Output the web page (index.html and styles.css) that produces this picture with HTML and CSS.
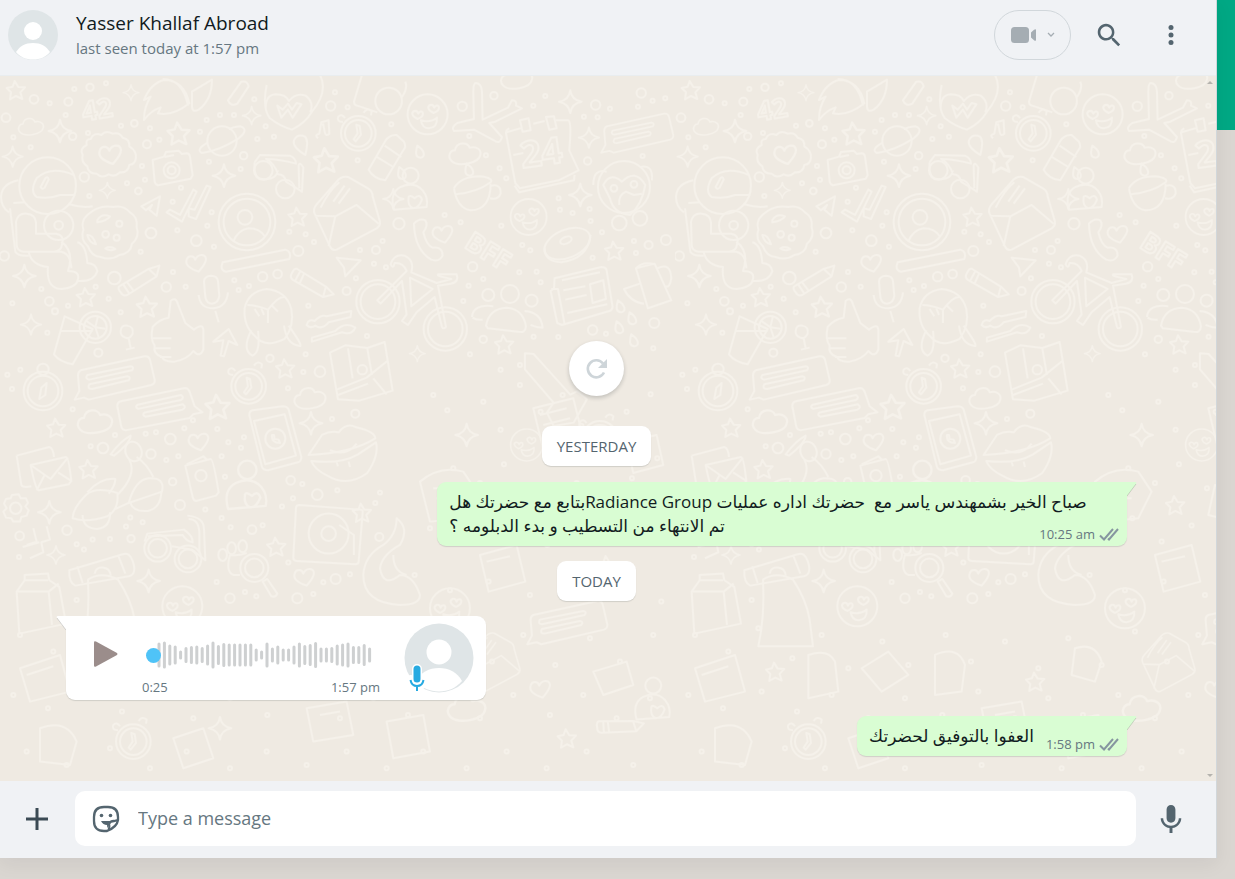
FILE: index.html
```html
<!DOCTYPE html>
<html lang="en">
<head>
  <meta charset="UTF-8" />
  <title>Chat</title>
  <link rel="stylesheet" href="styles.css">
</head>
<body>

  <main class="app">
    <header class="chat-header">
      <svg class="avatar" viewBox="0 0 50 50" aria-hidden="true">
        <circle cx="25" cy="25" r="25" fill="#dfe5e7"/>
        <circle cx="25" cy="21" r="9" fill="#fff"/>
        <path d="M8 42C12 36 17 33 25 33s13 3 17 9c-4 5-10 7.500-17 7.500S12 47 8 42z" fill="#fff"/>
      </svg>
      <div class="contact">
        <h1>Yasser Khallaf Abroad</h1>
        <p>last seen today at 1:57 pm</p>
      </div>
      <button class="video-btn" aria-label="Video call">
        <svg width="26" height="16" viewBox="0 0 26 16"><rect width="18" height="16" rx="3.500"/><path d="M20 5.500L23 2.700Q25 1.500 25 3v10q0 1.500-2 .3L20 10.500z"/></svg>
        <svg width="8" height="6" viewBox="0 0 8 6"><path d="M1 1l3 3 3-3" fill="none" stroke="#a5adb3" stroke-width="1.300"/></svg>
      </button>
      <button class="icon-btn" aria-label="Search">
        <svg width="30" height="30" viewBox="0 0 24 24"><path d="M15.900,14.300H15L14.700,14c1-1.100,1.600-2.700,1.600-4.300c0-3.700-3-6.700-6.700-6.700S3,6,3,9.700s3,6.700,6.700,6.700c1.600,0,3.200-0.600,4.300-1.600l0.300,0.300v0.800l5.100,5.100l1.500-1.500L15.900,14.300z M9.700,14.300c-2.600,0-4.600-2.100-4.600-4.600s2.100-4.600,4.600-4.600s4.600,2.100,4.600,4.600S12.300,14.300,9.700,14.300z"/></svg>
      </button>
      <button class="icon-btn" aria-label="Menu">
        <svg width="30" height="30" viewBox="0 0 24 24"><circle cx="12" cy="6" r="2"/><circle cx="12" cy="12" r="2"/><circle cx="12" cy="18" r="2"/></svg>
      </button>
    </header>

    <section class="chat">
      <svg class="wallpaper" width="100%" height="100%" aria-hidden="true">
        <defs>
          <path id="star" d="M-3-27L8-9 28-8 14 7 20 27 1 18-17 28-14 7-27-6-9-10z"/>
          <path id="spark" d="M0-34Q4-5 34 0 4 5 0 34-5 5-34 0-4-4 0-34z"/>
          <path id="heart" d="M8 28C-22 18-32 4-28-8-24-22-6-22-2-8 6-26 28-26 30-10 30 4 18 16 8 28z"/>
          <path id="cloud" d="M-40 22c-14-14-4-32 10-32 4-26 38-26 44-8 22-6 36 8 32 22-4 26-68 36-86 18z"/>
          <path id="drop" d="M-8-18C14-4 18 16 2 18-14 18-14 4-8-18z"/>
          <g id="pencil"><path d="M-60 22L28-30 60-40 52-8-36 48Q-48 54-56 40-66 28-60 22zM28-30L52-8M-50 14L-30 44M-38 8L-18 34"/></g>
          <g id="chat"><path d="M-100-20L92-62q12-2 16 10l14 60q2 12-10 16L-76 68l-14-6-28 6 14-26-4-46q0-12 8-16z"/><path d="M-80-6L50-32q12 2 4 12L-74 8q-14-2-6-14zM-74 22L40-2q12 2 4 12L-66 36q-16 0-8-14z"/></g>
          <g id="face"><circle r="60"/><path d="M-20 18Q8 26 28 10 30 40 4 42-16 42-20 18zM-30 14c-18-8-20-20-10-24 8-2 10 2 12 8 4-10 14-8 14 0 0 10-8 12-16 16zM18-4C0-12-2-24 8-28c8-2 10 2 12 8 4-10 14-8 14 0 0 10-8 12-16 16z"/></g>
          <g id="clock"><circle r="52"/><circle r="40"/><path d="M-6-26l10 4 4 26-16 20-6-6 12-18z"/><path d="M-46-34q-20 0-14-16 10-10 20 4M16-62q10-16 24-4l-2 12"/></g>
          <g id="mail"><path d="M-96 16q-6-14 6-28l60-68q14-18 34-14l60 34q14 8 14 24l22 76q2 12-10 20L-30 124q-14 4-20-10zM-96 22l62 2 64-34 66 56M-34 24l-20 90M-78-2q26-52 56-76M-40-20l34-48M-24-14l34-46"/></g>
          <g id="person"><circle cy="-48" r="24"/><path d="M-50 54q-14-50 20-68 40-18 66 10 18 22 12 50zM-6 16q-4 28 14 34 16 0 26-26-6-20-22-4-14-12-18-4z"/></g>
          <g id="dots"><path d="M40 187h0M92 217h0M149 85h0M197 120h0M223 42h0M264 174h0M363 152h0M450 160h0M478 194h0M600 170h0M620 135h0M660 120h0M702 120h0M763 73h0M797 154h0M822 185h0M772 192h0M627 260h0M722 282h0M426 273h0M435 314h0M543 338h0M381 325h0M268 363h0M518 380h0M532 466h0M635 412h0M622 452h0M868 470h0M917 478h0M942 501h0M1080 525h0M1148 498h0M1122 566h0M1068 610h0M1158 577h0M642 515h0M422 530h0M519 591h0M557 635h0M703 616h0M747 633h0M716 645h0M124 642h0M204 692h0M287 635h0M326 671h0M362 712h0M37 685h0M142 773h0M917 838h0M1101 783h0M925 692h0M1174 148h0M1073 256h0M1043 97h0M1005 52h0M318 25h0M1408 183h0M1458 241h0M1499 280h0M1636 63h0M1600 92h0M1752 125h0M1793 127h0M1830 101h0M1914 95h0M1958 77h0M1996 70h0M1928 243h0M1519 310h0M1676 370h0M1680 404h0M1718 414h0M1769 402h0M1772 438h0M1504 452h0M1382 442h0M1334 420h0M1567 510h0M1591 526h0M1610 590h0M1558 592h0M1622 622h0M1450 612h0M1406 632h0M1390 678h0M1806 472h0M1902 498h0M1908 534h0M1778 548h0M1601 785h0M1675 786h0M1410 838h0M1502 884h0M1560 870h0M1818 776h0M1960 820h0M22 899h0M61 884h0M36 942h0M218 1003h0M272 1114h0M345 1080h0M437 1076h0M468 1072h0M579 1036h0M553 1060h0M535 1144h0M499 1155h0M665 1144h0M675 1205h0M732 1087h0M685 1102h0M723 1118h0M652 1062h0M864 940h0M910 891h0M996 1032h0M1012 1246h0M846 1295h0M879 1270h0M907 1227h0M788 1351h0M692 1357h0M665 1329h0M616 1304h0M391 1328h0M428 1342h0M378 1355h0M330 1392h0M278 1394h0M230 1408h0M252 1424h0M57 1446h0M230 1575h0M650 1521h0M735 1551h0M769 1564h0M865 1463h0M970 1522h0M1050 1498h0M940 1557h0M1140 1253h0M1126 1284h0M1300 960h0M1342 1006h0M1450 980h0M1502 1064h0M1560 930h0M1622 1010h0M1688 960h0M1744 1052h0M1822 944h0M1880 1010h0M1952 958h0M1360 1180h0M1440 1224h0M1512 1168h0M1596 1240h0M1660 1160h0M1730 1224h0M1808 1144h0M1896 1210h0M1972 1150h0M1290 1360h0M1372 1330h0M1460 1400h0M1550 1352h0M1642 1410h0M1720 1342h0M1830 1400h0M1926 1350h0M1244 1500h0M1350 1546h0M1466 1520h0M1590 1560h0M1688 1512h0M1780 1570h0M1888 1530h0M1984 1580h0M60 1680h0M160 1730h0M250 1660h0M352 1750h0M440 1680h0M520 1780h0M622 1700h0M700 1770h0M812 1680h0M888 1760h0M990 1700h0M1090 1780h0M1180 1690h0M1280 1770h0M1380 1670h0M1476 1760h0M1570 1680h0M1666 1770h0M1770 1690h0M1860 1760h0M1960 1680h0M40 1860h0M144 1900h0M260 1850h0M366 1910h0M470 1860h0M580 1930h0M690 1870h0M802 1920h0M910 1850h0M1020 1930h0M1120 1870h0M1224 1920h0M1330 1860h0M1440 1930h0M1540 1860h0M1650 1920h0M1750 1860h0M1850 1930h0M1950 1870h0M80 2030h0M200 2070h0M330 2020h0M450 2080h0M560 2030h0M690 2080h0M800 2030h0M920 2070h0M1040 2030h0M1160 2080h0M1270 2030h0M1400 2080h0M1520 2030h0M1640 2080h0M1760 2030h0M1900 2070h0"/></g>
          <g id="rings"><circle cx="18" cy="128" r="13"/><circle cx="102" cy="73" r="13"/><circle cx="205" cy="80" r="12"/><circle cx="270" cy="37" r="11"/><circle cx="218" cy="184" r="11"/><circle cx="253" cy="306" r="14"/><circle cx="441" cy="208" r="12"/><circle cx="403" cy="145" r="10"/><circle cx="415" cy="348" r="10"/><circle cx="453" cy="474" r="16"/><circle cx="589" cy="497" r="16"/><circle cx="731" cy="242" r="11"/><circle cx="992" cy="93" r="14"/><circle cx="343" cy="609" r="19"/><circle cx="499" cy="636" r="14"/><circle cx="788" cy="605" r="14"/><circle cx="833" cy="597" r="13"/><circle cx="895" cy="528" r="15"/><circle cx="1040" cy="648" r="12"/><circle cx="148" cy="679" r="13"/><circle cx="13" cy="543" r="14"/><circle cx="165" cy="709" r="9"/><circle cx="810" cy="850" r="11"/><circle cx="1387" cy="94" r="14"/><circle cx="1482" cy="62" r="11"/><circle cx="1787" cy="90" r="14"/><circle cx="1924" cy="54" r="14"/><circle cx="1763" cy="258" r="11"/><circle cx="1197" cy="446" r="17"/><circle cx="1128" cy="525" r="12"/><circle cx="1418" cy="575" r="14"/><circle cx="1946" cy="510" r="12"/><circle cx="1998" cy="495" r="15"/><circle cx="1778" cy="765" r="14"/><circle cx="1963" cy="744" r="15"/><circle cx="1450" cy="793" r="11"/><circle cx="295" cy="833" r="12"/><circle cx="511" cy="1092" r="16"/><circle cx="453" cy="1137" r="14"/><circle cx="309" cy="1119" r="16"/><circle cx="518" cy="1220" r="11"/><circle cx="540" cy="1290" r="15"/><circle cx="201" cy="1366" r="14"/><circle cx="59" cy="1383" r="13"/><circle cx="393" cy="1391" r="11"/><circle cx="756" cy="1364" r="13"/><circle cx="952" cy="1259" r="16"/><circle cx="872" cy="1216" r="13"/><circle cx="1007" cy="1512" r="15"/><circle cx="892" cy="1570" r="15"/><circle cx="1138" cy="1386" r="12"/><circle cx="690" cy="1570" r="14"/><circle cx="960" cy="890" r="16"/><circle cx="1066" cy="1016" r="12"/></g>
          <pattern id="doodles" width="675" height="720" patternUnits="userSpaceOnUse">
            <g class="doodle" transform="translate(0 -1) scale(.3333)">
              <use href="#dots" class="dot-outer"/><use href="#dots" class="dot-inner"/><use href="#rings"/>
              <g>
                <use href="#star" x="47" y="45"/><use href="#star" transform="translate(535 175) scale(1.200)"/><use href="#star" transform="translate(977 255) scale(1.300)"/><use href="#star" x="892" y="425"/><use href="#star" x="257" y="666"/><use href="#star" transform="translate(440 695) scale(1.100)"/><use href="#star" x="855" y="880"/><use href="#star" x="1512" y="808"/><use href="#star" x="1842" y="527"/><use href="#star" transform="translate(652 995) scale(1.300)"/><use href="#star" x="168" y="1058"/><use href="#star" x="265" y="1182"/><use href="#star" x="828" y="1415"/><use href="#star" x="1085" y="1313"/><use href="#star" x="1500" y="1290"/><use href="#star" x="1820" y="1470"/><use href="#star" x="300" y="1790"/><use href="#star" x="1080" y="1820"/><use href="#star" x="1700" y="1990"/>
                <use href="#spark" x="180" y="168"/><use href="#spark" transform="translate(38 245) scale(.9)"/><use href="#spark" transform="translate(393 53) scale(.7)"/><use href="#spark" transform="translate(755 122) scale(.8)"/><use href="#spark" x="672" y="302"/><use href="#spark" transform="translate(322 346) scale(.7)"/><use href="#spark" x="73" y="603"/><use href="#spark" transform="translate(93 749) scale(.9)"/><use href="#spark" x="1711" y="80"/><use href="#spark" transform="translate(1767 188) scale(.9)"/><use href="#spark" x="1741" y="360"/><use href="#spark" transform="translate(1180 372) scale(.9)"/><use href="#spark" transform="translate(1252 836) scale(.7)"/><use href="#spark" x="148" y="1312"/><use href="#spark" transform="translate(168 1440) scale(.8)"/><use href="#spark" x="446" y="1518"/><use href="#spark" x="933" y="1045"/><use href="#spark" x="1400" y="1080"/><use href="#spark" x="1900" y="1280"/><use href="#spark" x="660" y="1960"/>
                <use href="#heart" x="588" y="562"/><use href="#heart" x="595" y="1098"/><use href="#heart" x="912" y="1504"/><use href="#heart" transform="translate(330 236) scale(1.100)"/><use href="#heart" x="1327" y="475"/><use href="#heart" x="1620" y="1840"/>
                <use href="#cloud" transform="translate(93 155) scale(.8)"/><use href="#cloud" x="1395" y="236"/><use href="#cloud" x="930" y="970"/><use href="#cloud" transform="translate(285 1040) scale(1.100)"/><use href="#cloud" x="1550" y="10"/><use href="#cloud" transform="translate(1400 1900) scale(1.200)"/>
                <use href="#drop" x="1260" y="230"/><use href="#drop" x="1206" y="294"/><use href="#drop" x="1408" y="284"/><use href="#drop" x="1897" y="730"/><use href="#drop" x="1858" y="757"/><use href="#drop" x="1902" y="796"/><use href="#drop" x="1862" y="694"/>
                <use href="#pencil" x="418" y="612"/><use href="#pencil" transform="translate(938 624) rotate(62)"/><use href="#pencil" transform="translate(1860 1950) rotate(30)"/>
                <use href="#chat" transform="translate(1910 172) scale(.9)"/><use href="#chat" x="342" y="906"/><use href="#chat" transform="translate(472 998) scale(-1 1) rotate(24)"/><use href="#chat" x="1700" y="1640"/>
                <use href="#face" x="1283" y="118"/><use href="#face" transform="translate(1586 426) scale(.9)"/><use href="#face" x="547" y="1594"/><use href="#face" x="1350" y="1600"/><use href="#face" transform="translate(1580 1110) scale(.8)"/>
                <use href="#clock" x="1075" y="175"/><use href="#clock" x="746" y="934"/><use href="#clock" x="1800" y="1090"/><use href="#clock" x="400" y="2000"/>
                <use href="#mail" x="1040" y="400"/><use href="#mail" transform="translate(1480 1750) scale(.8)"/>
                <use href="#person" x="1232" y="350"/><use href="#person" transform="translate(742 1240) scale(1.150)"/><use href="#person" x="1960" y="1880"/>
              </g>
              <text x="245" y="130" class="doodle-text" transform="rotate(-10 300 100)">42</text>
              <text x="1562" y="272" class="doodle-text doodle-text-big" transform="rotate(-8 1620 240)">24</text>
              <text x="1390" y="515" class="doodle-text" transform="rotate(32 1390 515)">BFF</text>
              <!-- astronaut -->
              <circle cx="143" cy="332" r="85"/><path d="M222 300q-70-30-112 10-22 40 0 56 40 6 70-6h46M122 336l14-26q8-8 10 4l-12 24q-8 8-12-2zM55 316q-50 10-52 50 0 30 24 46M40 384l34-2M30 400l16 130q8 14 40 12M48 440q6-26 32-24 26 2 28 26v34h60q26 4 18 32-2 20-24 22H70q-20-2-20-22zM86 532q10 40 58 44-6 64 40 66 44-4 50-28M144 530h40q28 6 30 50M184 500q40 30 20 88 40 0 28 30 50 4 60-30-4-22-30-24-4-56-30-62M208 388q40 12 70 6"/><circle cx="176" cy="451" r="44"/><circle cx="176" cy="451" r="13"/>
              <!-- cookie and badge -->
              <path d="M262 420q-20 18-12 44-10 30 14 50 10 30 38 32 30 12 56-6 34-4 38-34 24-20 14-50 4-30-20-44-20-22-50-16-44-8-78 24zM292 436q12-22 38-12-10 14-38 18zM262 480q16-2 26 28-20-4-26-28zM316 520q16-8 30 2-16 8-30-2z"/><circle cx="317" cy="478" r="10"/><circle cx="350" cy="488" r="9"/><circle cx="358" cy="446" r="9"/>
              <path d="M272 192q10-22 32-12 14-16 34-4 20-6 30 12 22 4 20 26 22 14 20 34-2 20-20 22-4 24-28 22-16 16-34 6-22 14-36-2-26 0-28-22-20-14-14-34-10-20 12-30-4-18 12-18z"/>
              <!-- rocket, bag, heart with letter -->
              <path d="M432 135q0-40 20-70l-20 10q20-50 60-60 60 0 76 70-50 40-94 30l8-18q-30 10-50 38zM488 12q60 0 76 80M576 50l60-36q0 60-40 90-20 10-20-10zM684 76l40-56q18-4 22 14l-34 52q-20 10-28-10zM800 30q-14 70 10 100 30 24 66 34 40-20 60-54 50-60 24-110M797 100q0-40 30-42 30 0 40 20 20-26 50-16 26 20 14 50M832 92l12 36 20-24 14 24 26-40-14-4-14 20-12-18-16 18z"/>
              <!-- planet, camera, glasses, marker -->
              <circle cx="666" cy="198" r="44"/><path d="M622 204q-36 20-16 30 50-6 110-44 32-26 6-36-26 2-34 10"/>
              <path d="M458 255l34-10 6-14 38-4 10 10 14-2q8 0 10 10l8 56-6 10-98 20q-8-2-10-12zM494 246l28-6"/><circle cx="515" cy="286" r="24"/><circle cx="515" cy="286" r="12"/>
              <path d="M764 262l16-22 90 2q18 8 18 24-50-14-90-14 26 14 36 46 20 0 24 22l48 30 4-72q-10-20-14-6l2 68M764 262q-4 50 24 50 40 4 46-26"/><circle cx="790" cy="286" r="28"/><circle cx="856" cy="342" r="28"/><path d="M916 240q-40-24-34-44 10-20 32-12 14 10 2 56z"/>
              <!-- ticks, paper plane, contact badge, password bar -->
              <path d="M500 412l10-8 30 16 40-76 10 6-44 90zM566 400l18 4 36-72 12 4-44 96-22-8zM424 394l56-30-10 58-22-18 8-14-18 16zM1010 548l72 8-46 48-4-26z"/>
              <circle cx="741" cy="441" r="85"/><circle cx="741" cy="441" r="70"/><circle cx="735" cy="427" r="22"/><path d="M700 500q14-36 46-40 34 0 50 26M668 562l188-38q20 6 12 28l-190 38q-20-4-10-28z"/>
              <!-- thumb up, cup, mic, child, music -->
              <path d="M458 756q20-24 48-28l6-50q16-14 22 10l22 56 26 20q26-20 28 0v60q-10 26-30 4-16 24-56 32-32 2-38-14-28-10-22-34-14-20-6-56zM458 790h56M466 820h46M480 846h34"/>
              <path d="M194 724l84 38-60 106q-40-8-56-30zM184 768h94"/><circle cx="286" cy="757" r="47"/><circle cx="286" cy="757" r="34"/><path d="M286 757l-28-20M286 757l8-34M286 757l30 4M286 757l10 30M362 770q0-20 20-18 20 4 16 24-10 18-22 12-14-6-14-18zM386 790l6 30M378 824l26-6"/>
              <path d="M612 620q0-16 20-18 20 0 22 16l4 44q-2 22-22 24-16 0-20-20zM596 660q4 40 44 40 40-4 44-48M646 708l10 34M640 800l46-38 26 48-26-12-14 46-10-2 8-46z"/>
              <path d="M734 700q10-50 66-58 60 6 74 60 10 50-20 90-60 30-90-10-34-30-30-82zM742 690q26 0 62 14 30-40 50-38M764 702l14 22M784 700l8 20M804 704v40M814 690l20 20M754 766q-30 60 4 76 24-10 16-74M866 752q50 70 30 60-36-4-44-60"/>
              <path d="M954 190q-12-10 4-14l6-34 22-6 2 40q-12 10-14-6l-4-22-8 2M920 750q6-20 24-12 20-20 36-14l74-16-2 18-66 16q-20 24-40 10-14 10-26-2zM936 788l70-20q30-30 60-10-10 24-40 14l-90 28z"/>
              <!-- bottle, bicycle, plane, calendar -->
              <path d="M1106 284l50-86q12-20 34-18l22 20q8 16-2 26l-54 90q-34-4-50-32zM1154 212l50 34M1128 244l52 32"/>
              <circle cx="1134" cy="680" r="65"/><circle cx="1134" cy="680" r="52"/><circle cx="1336" cy="762" r="65"/><circle cx="1336" cy="762" r="52"/><path d="M1132 676l88-88q-10-26-36-24-4 20-12 4 10-32 42-26 30 14 20 50l76 32 44-12q-50-10-38-14h54q8 24-18 28l-38 6 24 124q-8 8-12 0l-22-90-54 46-26 38-18-12 14-20-14-100-64 68zM1230 608l68 34-64 52z"/>
              <path d="M1420 50q0-26 8-26 16 2 18 24l2 86 76-36 12-22q16 0 12 16l18 8-80 40-18 4 38 42q-6 24-24 10l-60-32-60 4q-10-10 10-24l50-12z"/>
              <path d="M1520 172l48-14M1600 146l34-8M1668 136l36 0q12 0 4 90l28 60-60 30-116 24-14-16-28-150q0-10 10-14M1540 240l30-6M1544 332l14 20 164-36 2-16M1560 136l26-6 6 36-24 4zM1638 126l24-2 8 36-22 4zM1086 0l-24 80q0 10 10 12l60 20M1216 20q8 20-10 46"/><circle cx="1166" cy="78" r="40"/>
              <!-- cup, phone, monkey, donut, group, news, watering can -->
              <path d="M1362 340q20-36 80-36 40 6 30 18-40 30-104 36M1362 340q10 60 50 66 60-2 60-80M1474 332q30-6 28 24-8 20-32 14"/>
              <path d="M1242 446q16-18 34-10 10 14-6 36 10 40 28 46 30-4 30 24-10 20-34 12-50-30-52-108z"/>
              <circle cx="1872" cy="336" r="78"/><path d="M1810 330q20-40 56-10 40-40 70 10-10 60-46 90-50-4-60-50zM1820 290q-40-10-40 40M1920 276q40-10 36 40M1858 390q-4-30 20-40l24 10 24-4"/><circle cx="1842" cy="340" r="10"/><circle cx="1902" cy="328" r="10"/><circle cx="1858" cy="444" r="22"/><circle cx="1920" cy="430" r="22"/>
              <ellipse cx="1702" cy="506" rx="72" ry="42" transform="rotate(-22 1702 506)"/><ellipse cx="1698" cy="496" rx="18" ry="10" transform="rotate(-22 1698 496)"/><path d="M1634 520q0 40 50 42 80-10 88-82"/>
              <circle cx="1465" cy="660" r="18"/><circle cx="1530" cy="657" r="27"/><circle cx="1595" cy="677" r="18"/><path d="M1458 752q10-52 62-54 50 4 58 56-2 22-24 16l-90-10zM1416 726q4-40 64-32M1418 728q10 8 30 6M1574 708q50 4 54 50-20 0-36-8"/>
              <path d="M1664 610l140-34q14 0 16 10l18 110q-2 10-10 12l-142 42-14-6-20-96 10-8zM1654 642l20 0 20 106M1686 616l114-24M1690 646l66-12M1696 674l64-14M1702 714l120-26M1770 628l40-12 8 56-40 12z"/>
              <path d="M1908 580l56-14 50 110-70 24zM1910 578q20-20 54-10M1920 626l-48 16q20 40 60 44M1972 580q40-20 42 30-4 30-18 24"/>
              <!-- map, compass, phone, lips -->
              <path d="M990 833l46-22 66 8 52-18 24 146-100 30-64-4zM1010 944l90-36 62-50M1014 960l90-34M1120 910l40 48M1044 820l14 90M1102 820l14 80"/><circle cx="1087" cy="884" r="14"/>
              <circle cx="129" cy="948" r="58"/><circle cx="129" cy="948" r="46"/><circle cx="129" cy="883" r="17"/><path d="M118 972l6-34 16-14-4 36z"/>
              <path d="M748 1020q0-12 10-14l90-12q14 0 18 10l38 142q0 14-10 16l-90 24q-14 0-18-10zM762 1038l92-20 34 124-92 26z"/><circle cx="826" cy="1091" r="30"/><path d="M816 1080q-2 24 24 24l-4-10-12-2-2-12z"/>
              <path d="M926 1140l40-60q26-14 50-8 24-30 50-16 60 14 60 34-70 44-200 50zM934 1158q90 10 140-20l54-36q10 40-26 92-60 44-120 8-40-20-48-44zM990 1126q50 20 80-20M1010 1162l4 12M1046 1160l4 16"/>
              <!-- envelopes, scooter, card, gear -->
              <path d="M50 1142l98-26q12 4 14 30M50 1142l14 88q4 10 30 4M92 1170l106-24q8 0 16 72l-8 10-90 18q-10-4-24-76zM92 1170l60 42 52-64M110 1246l24-46M214 1218l-40-26"/>
              <path d="M218 1330q0-30 40-70 30-26 94-6 6 50-30 70-60 20-104 6zM262 1252q40-44 84-40 0 20-20 44M352 1260q60-60 36-106M410 1146q30 20 50 60M386 1284q20-70 60-74 50-4 40 40-46 16-100 34l-44 20M332 1138q30-40 60-56 0 20-50 60z"/><path d="M248 1320q0 40 44 42 40-4 38-50M390 1282q10 30 54 26 40-10 40-60M396 1100a24 30-20 1 0 2 0z"/>
              <path d="M556 1172l76-20q8 0 24 100l-8 10-60 16q-8-2-10-12zM560 1168l50-24 12 12"/><circle cx="603" cy="1202" r="17"/>
              <circle cx="47" cy="1300" r="17"/><path d="M36 1260l20-2 6 12 16 0 6 14-8 10 10 12-6 16-16 4-4 14-20 0-6-10-16-2-8-18 10-10-8-14 6-14 14-2z"/>
              <!-- binoculars, paw, turntable, boxes, dress, octopus -->
              <circle cx="473" cy="1420" r="40"/><circle cx="473" cy="1420" r="28"/><circle cx="564" cy="1452" r="40"/><circle cx="564" cy="1452" r="28"/><path d="M434 1400l8-24 110-12q28 20 26 38-20-4-30-22l-104 4M562 1322q50 4 50 40l4 94-40-32-60-10M566 1332q30 0 32 40v60"/>
              <path d="M690 1440q24 4 50-6M690 1440q-14 50 10 60h20"/><circle cx="763" cy="1479" r="42"/><circle cx="763" cy="1479" r="28"/><ellipse cx="695" cy="1420" rx="13" ry="18"/><ellipse cx="728" cy="1414" rx="13" ry="18"/><ellipse cx="668" cy="1440" rx="13" ry="18"/><path d="M788 1520l14-8 30 44q-4 12-18 8z"/>
              <path d="M888 1300q0-10 10-10l182 14q10 0 8 10l-12 146q0 8-10 8l-176-10q-10 0-10-10zM1018 1350l44 30v60"/><circle cx="986" cy="1376" r="60"/><circle cx="986" cy="1376" r="22"/>
              <path d="M208 1486l160-48q20-8 30 20 14 40-12 46l-160 28q-20-8-18-46zM232 1474l16 50M354 1440l22 56M284 1496q4-20 24-18 22 2 24 24"/>
              <path d="M50 1550l24-34 0-16 70-4 4 20 30 20 20 110-140 30zM50 1550l96 0 30-24M146 1550l10 100M74 1516l70 0"/>
              <path d="M264 1514q40-26 90 0 40 60 50 120l10 80H250q20-90 14-200zM100 1360l10 40-30 10M140 1354l10 40-26 8 6 30-40 18M68 1416l50-14"/>
              <path d="M1190 1330q40 30 10 80-54 30-60 70 10 60 60 20 40 0 60 60 0 30-60 30-110-6-110-90 4-60 60-90 40-30 40-80zM1180 1440q0 50 40 60"/>
              <path d="M1260 1220q60-50 130-30l40 60-40 80-100 10zM1300 1240h70M1310 1270h60M1600 1000l120-30 30 120-120 34zM1620 1020l80-20M1630 1050l80-20M1575 835l26 2 20 22 90 100 20-10 30 24-40 70-60 10-20-40 20-30-86-100zM1880 1100l90-20 20 90-90 24zM1440 1440l110-30 26 110-110 30zM1460 1460l70-16M1780 1300q60-30 80 30-10 50-60 40-50-20-20-70zM1620 1230l80 30-20 80-80-20z"/>
              <path d="M60 1780l120-40 30 110-120 30zM80 1800l80-26M400 1740q60-20 80 20l10 90-90 20zM560 1780l80-50 60 70-80 50zM780 1740q70-30 90 30l-10 80-80 10zM920 1900l120-20 20 100-120 20zM960 1920l60-10M120 1960q80-30 110 40l-20 70-90-10zM520 1990l90-30 30 90-90 30zM1160 1940l110-20 20 110-110 20zM1200 1720q60-20 80 40l-20 60-70-20zM1780 1790l100-30 20 70-90 30z"/>
            </g>
          </pattern>
        </defs>
        <rect width="100%" height="100%" fill="url(#doodles)"/>
      </svg>

      <div class="messages">
        <button class="refresh" aria-label="Load older messages">
          <svg width="22" height="22" viewBox="0 0 22 22"><path d="M18 14.500A8.500 8.500 0 1 1 17 5.500" fill="none" stroke="#ced5d9" stroke-width="2.600"/><path d="M21 1v9h-9z" fill="#ced5d9"/></svg>
        </button>

        <div class="day">YESTERDAY</div>

        <div class="bubble out stacked">
          <svg class="tail" width="10" height="15" viewBox="0 0 10 15"><path d="M0 0h8q2 0 1 2L0 14z"/><path class="tail-edge" d="M9 2L0 14"/></svg>
          <p class="text" dir="rtl" lang="ar">صباح الخير بشمهندس ياسر مع &nbsp;حضرتك اداره عمليات Radiance Groupبتابع مع حضرتك هل تم الانتهاء من التسطيب و بدء الدبلومه ؟</p>
          <div class="meta">10:25 am
            <svg width="20" height="13" viewBox="0 0 20 13"><path d="M1 7.500l4 4L14 1M9 10.500l1 1L19 1"/></svg>
          </div>
        </div>

        <div class="day">TODAY</div>

        <div class="bubble in voice">
          <svg class="tail" width="10" height="15" viewBox="0 0 10 15"><path d="M10 0H2Q0 0 1 2l9 12z"/><path class="tail-edge" d="M1 2l9 12"/></svg>
          <button class="play" aria-label="Play">
            <svg width="24" height="28" viewBox="0 0 24 28"><path d="M0 2.500Q0 .5 2 1.500L23 13q1 1 0 2L2 26.500q-2 1-2-1z"/></svg>
          </button>
          <div class="track">
            <div class="wave">
              <svg width="216" height="28" viewBox="0 0 216 28" aria-hidden="true"><path d="M2 3v22M7.400 2v24M12.800 5v18M18.200 6v16M23.600 11v6M29 7.500v13M34.400 6.500v15M39.800 6v16M45.200 7.500v13M50.600 5v18M56 2v24M61.400 5.500v17M66.800 3.500v21M72.200 4v20M77.600 4v20M83 4v20M88.400 4v20M93.800 4v20M99.200 9v10M104.600 11v6M110 3v22M115.400 8v12M120.800 6v16M126.200 9v10M131.600 9v10M137 6v16M142.400 3v22M147.800 5.500v17M153.200 4.500v19M158.600 2.500v23M164 8v12M169.400 8v12M174.800 7.500v13M180.200 5v18M185.600 4v20M191 3v22M196.400 6.500v15M201.800 6.500v15M207.200 4.500v19M212.600 8v12"/></svg>
              <input type="range" class="seek" min="0" max="25" value="0" aria-label="Seek">
            </div>
            <div class="times"><span>0:25</span><span>1:57 pm</span></div>
          </div>
          <svg class="voice-avatar" viewBox="0 0 70 70" aria-hidden="true">
            <circle cx="35" cy="35" r="34.500" fill="#dfe5e7"/>
            <circle cx="35" cy="29" r="12.500" fill="#fff"/>
            <path d="M12 58c5-9 13-13 23-13s18 4 23 13c-6 7-14 10.500-23 10.500S18 65 12 58z" fill="#fff"/>
            <g stroke-linecap="round" fill="none"><path d="M13 46v11M7 57q1 6 6 6t6-6M13 63v4" stroke="#fff" stroke-width="10"/><path d="M13 46v10" stroke="#27aae1" stroke-width="7"/><path d="M6.500 57q1 6 6.500 6t6.500-6M13 63v5" stroke="#27aae1" stroke-width="2" stroke-linecap="butt"/></g>
          </svg>
        </div>

        <div class="bubble out">
          <svg class="tail" width="10" height="15" viewBox="0 0 10 15"><path d="M0 0h8q2 0 1 2L0 14z"/><path class="tail-edge" d="M9 2L0 14"/></svg>
          <p class="text" dir="rtl" lang="ar">العفوا بالتوفيق لحضرتك</p>
          <div class="meta">1:58 pm
            <svg width="20" height="13" viewBox="0 0 20 13"><path d="M1 7.500l4 4L14 1M9 10.500l1 1L19 1"/></svg>
          </div>
        </div>
      </div>

      <div class="scroll-marks" aria-hidden="true"><i class="up"></i><i class="down"></i></div>
    </section>

    <footer class="composer">
      <button class="icon-btn" aria-label="Attach">
        <svg width="24" height="24" viewBox="0 0 24 24"><path d="M12 1v22M1 12h22" fill="none" stroke="#3b4a54" stroke-width="3"/></svg>
      </button>
      <div class="input-box">
        <button class="sticker" aria-label="Stickers">
          <svg width="28" height="28" viewBox="0 0 28 28" fill="none" stroke="#54656f" stroke-width="2.300"><path d="M15 26h-3Q2 26 2 16v-4Q2 2 12 2h4q10 0 10 10v3q-1 7-11 11z"/><path d="M16 25q2-1 1-6 1-3 5-3l4-1"/><path d="M9 16h10q-2 2-3 3v4q-1 0-1-3-4 0-6-4z" fill="#54656f" stroke="none"/><circle cx="9.500" cy="10.500" r="1.800" fill="#54656f" stroke="none"/><circle cx="18.500" cy="10.500" r="1.800" fill="#54656f" stroke="none"/></svg>
        </button>
        <input type="text" placeholder="Type a message" aria-label="Type a message">
      </div>
      <button class="icon-btn" aria-label="Record voice message">
        <svg width="30" height="30" viewBox="0 0 24 24"><path d="M11.999,14.942c2.001,0,3.531-1.530,3.531-3.531V4.350c0-2.001-1.530-3.531-3.531-3.531S8.469,2.350,8.469,4.350v7.061C8.469,13.412,9.999,14.942,11.999,14.942z M18.237,11.412c0,3.531-2.942,6.002-6.237,6.002s-6.237-2.471-6.237-6.002H3.761c0,4.001,3.178,7.297,7.061,7.885v3.884h2.354v-3.884c3.884-0.588,7.061-3.884,7.061-7.885L18.237,11.412z"/></svg>
      </button>
    </footer>
  </main>

</body>
</html>
```

FILE: styles.css
```css
* {
  box-sizing: border-box;
}
body {
  margin: 0;
  min-height: 100vh;
  padding: 0 18px 21px 0;
  display: flex;
  background: linear-gradient(#00a884 130px, #dad6d1 130px);
  font-family: "Open Sans", "Noto Sans", "DejaVu Sans", sans-serif;
  color: #111b21;
}
h1, p {
  margin: 0;
  font-weight: 400;
}
button {
  border: none;
  background: none;
  padding: 0;
  display: flex;
  align-items: center;
  justify-content: center;
  cursor: pointer;
  fill: #54656f;
}
.app {
  flex: 1;
  display: flex;
  flex-direction: column;
  border-right: 1px solid #d1d7db;
  box-shadow: 0 6px 18px rgba(11, 20, 26, 0.06);
}

/* Header */
.chat-header {
  display: flex;
  align-items: center;
  height: 76px;
  padding: 0 20px 6px 8px;
  background: #f0f2f5;
  border-bottom: 1px solid #e9edef;
}
.avatar {
  width: 50px;
  height: 50px;
}
.contact {
  flex: 1;
  padding-left: 18px;
}
.contact h1 {
  font-size: 19px;
  line-height: 26px;
}
.contact p {
  font-size: 15px;
  line-height: 24px;
  color: #667781;
}
.video-btn {
  width: 77px;
  height: 50px;
  gap: 10px;
  border: 1px solid #d1d7db;
  border-radius: 25px;
  margin-right: 13px;
  fill: #a5adb3;
}
.icon-btn {
  width: 50px;
  height: 50px;
}
.icon-btn + .icon-btn {
  margin-left: 12px;
}

/* Chat area */
.chat {
  flex: 1;
  position: relative;
  display: flex;
  flex-direction: column;
  justify-content: flex-end;
  background: #efeae2;
}
.wallpaper {
  position: absolute;
  inset: 0;
}
.doodle {
  fill: none;
  stroke: #f5f1ea;
  stroke-width: 6;
  stroke-linejoin: round;
}
.dot-outer {
  stroke-width: 18;
  stroke-linecap: round;
}
.dot-inner {
  stroke: #efeae2;
  stroke-width: 6;
  stroke-linecap: round;
}
.doodle-text {
  font-size: 80px;
  font-weight: 700;
}
.doodle-text-big {
  font-size: 110px;
}
.messages {
  position: relative;
  display: flex;
  flex-direction: column;
  align-items: center;
  gap: 15px;
  padding: 24px 89px 25px 66px;
}
.refresh {
  width: 55px;
  height: 55px;
  border-radius: 50%;
  background: #fff;
  box-shadow: 0 2px 4px rgba(11, 20, 26, 0.2);
  margin-bottom: 15px;
}
.day {
  padding: 0 15px;
  border-radius: 9px;
  background: #fff;
  box-shadow: 0 1px 1px rgba(11, 20, 26, 0.13);
  font-size: 15px;
  line-height: 40px;
  color: #54656f;
}
.bubble {
  position: relative;
  display: flex;
  border-radius: 9px;
  box-shadow: 0 1px 1px rgba(11, 20, 26, 0.13);
}
.out {
  align-self: flex-end;
  max-width: 65%;
  padding: 8px 8px 8px 12px;
  background: #d9fdd3;
  fill: #d9fdd3;
  border-top-right-radius: 0;
}
.in {
  align-self: flex-start;
  background: #fff;
  fill: #fff;
  border-top-left-radius: 0;
}
.tail {
  position: absolute;
  top: 0;
}
.tail-edge {
  fill: none;
  stroke: rgba(11, 20, 26, 0.15);
}
.out .tail {
  left: 100%;
}
.in .tail {
  right: 100%;
}
.text {
  font-family: "Open Sans", "DejaVu Sans", sans-serif;
  font-size: 17px;
  line-height: 24px;
  text-align: left;
}
.meta {
  display: flex;
  align-items: center;
  gap: 4px;
  align-self: flex-end;
  margin: 0 0 -6px 12px;
  font-size: 13px;
  line-height: 20px;
  color: #667781;
}
.meta path {
  fill: none;
  stroke: #8696a0;
  stroke-width: 2;
}
.stacked {
  flex-direction: column;
  margin-top: 1px;
  padding-right: 8px;
}
.stacked .text {
  padding-right: 16px;
}
.stacked .meta {
  margin-top: -14px;
}

/* Voice message */
.voice {
  width: 420px;
  max-width: 100%;
  height: 84px;
  margin-bottom: 1px;
  padding: 0 12px 0 28px;
}
.play {
  align-self: flex-start;
  margin: 24px 24px 0 0;
  fill: #9b8d8b;
}
.track {
  flex: 1;
  padding: 25px 24px 0 0;
}
.wave {
  position: relative;
  height: 28px;
  padding-left: 15px;
}
.wave path {
  fill: none;
  stroke: #ced0d1;
  stroke-width: 3;
  stroke-linecap: round;
}
.seek {
  position: absolute;
  top: 0;
  left: 4px;
  width: 226px;
  height: 28px;
  margin: 0;
  appearance: none;
  background: none;
}
.seek::-webkit-slider-thumb {
  appearance: none;
  width: 15px;
  height: 15px;
  border-radius: 50%;
  background: #4fc3f7;
}
.times {
  display: flex;
  justify-content: space-between;
  padding-top: 8px;
  font-size: 13px;
  line-height: 20px;
  color: #667781;
}
.voice-avatar {
  width: 70px;
  height: 70px;
  margin-top: 7px;
}

/* Scrollbar arrows */
.scroll-marks {
  position: absolute;
  top: 5px;
  bottom: 4px;
  right: 3px;
  display: flex;
  flex-direction: column;
  justify-content: space-between;
}
.scroll-marks i {
  border: 3px solid transparent;
}
.scroll-marks .up {
  border-top: none;
  border-bottom-color: #b5b3ae;
}
.scroll-marks .down {
  border-bottom: none;
  border-top-color: #b5b3ae;
}

/* Composer */
.composer {
  display: flex;
  align-items: center;
  gap: 10px;
  padding: 10px 20px 12px 12px;
  background: #f0f2f5;
}
.input-box {
  flex: 1;
  display: flex;
  align-items: center;
  height: 55px;
  margin-left: 3px;
  border-radius: 10px;
  background: #fff;
}
.sticker {
  margin: 0 18px 0 17px;
}
.input-box input {
  flex: 1;
  border: none;
  outline: none;
  padding: 0 0 2px;
  background: none;
  font: inherit;
  font-size: 18px;
  color: #3b4a54;
}
.input-box input::placeholder {
  color: #667781;
}
```
